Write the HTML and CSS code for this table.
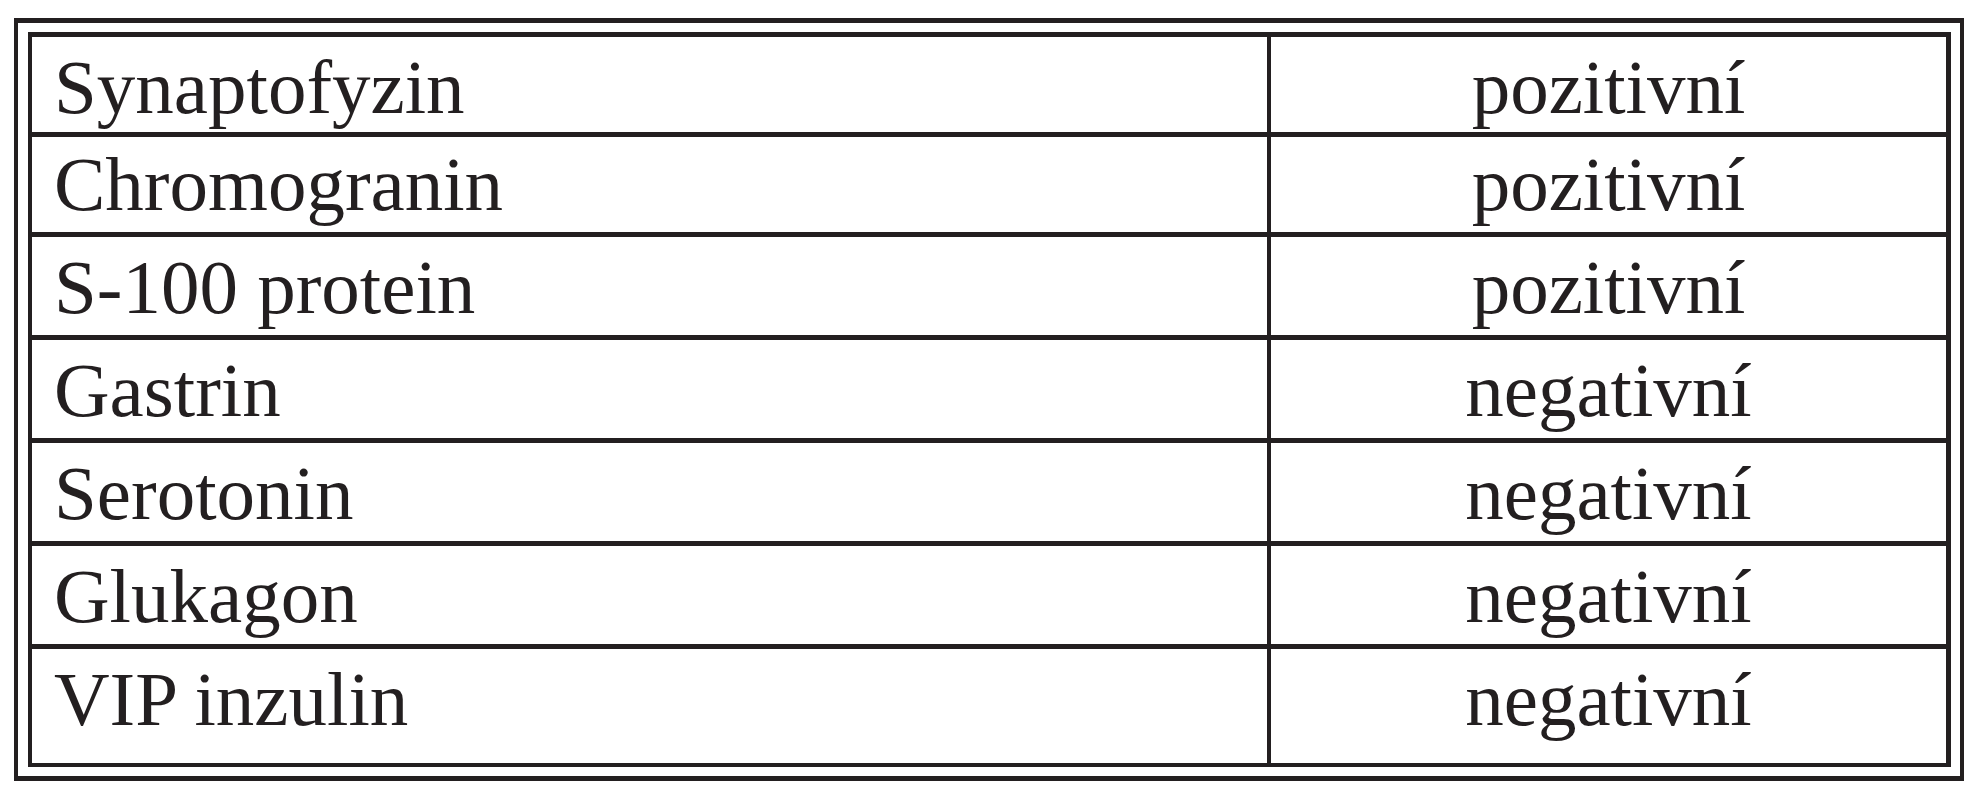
FILE: index.html
```html
<!DOCTYPE html>
<html lang="cs">
<head>
<meta charset="utf-8">
<title>Imunohistochemie</title>
<link rel="stylesheet" href="styles.css">
</head>
<body>
<div class="frame">
  <div class="grid" role="table">
    <div class="row" role="row"><div class="cell name" role="cell">Synaptofyzin</div><div class="cell value" role="cell">pozitivní</div></div>
    <div class="row" role="row"><div class="cell name" role="cell">Chromogranin</div><div class="cell value" role="cell">pozitivní</div></div>
    <div class="row" role="row"><div class="cell name" role="cell">S-100 protein</div><div class="cell value" role="cell">pozitivní</div></div>
    <div class="row" role="row"><div class="cell name" role="cell">Gastrin</div><div class="cell value" role="cell">negativní</div></div>
    <div class="row" role="row"><div class="cell name" role="cell">Serotonin</div><div class="cell value" role="cell">negativní</div></div>
    <div class="row" role="row"><div class="cell name" role="cell">Glukagon</div><div class="cell value" role="cell">negativní</div></div>
    <div class="row last" role="row"><div class="cell name" role="cell">VIP inzulin</div><div class="cell value" role="cell">negativní</div></div>
  </div>
</div>
</body>
</html>
```

FILE: styles.css
```css
html, body {
  margin: 0;
  padding: 0;
  background: #ffffff;
}

body {
  font-family: "Liberation Serif", "Times New Roman", serif;
  color: #231f20;
}

.frame {
  box-sizing: border-box;
  width: 1950px;
  margin: 18px 0 0 14px;
  border-style: solid;
  border-color: #231f20;
  border-width: 5px 4px 5px 4px;
  padding: 9px 9px 9px 10px;
}

.grid {
  display: grid;
  grid-template-rows: 97px repeat(5, 103px) 114px;
  border-style: solid;
  border-color: #231f20;
  border-width: 5px 5px 4px 4px;
}

.row {
  display: grid;
  grid-template-columns: 1239px 1fr;
}

.cell {
  box-sizing: border-box;
  font-size: 77px;
  line-height: normal;
  padding-top: 6px;
  border-bottom: 5px solid #231f20;
  white-space: nowrap;
}

.row.last .cell {
  border-bottom: none;
}

.name {
  padding-left: 22px;
  border-right: 4px solid #231f20;
}

.value {
  text-align: center;
}
```
